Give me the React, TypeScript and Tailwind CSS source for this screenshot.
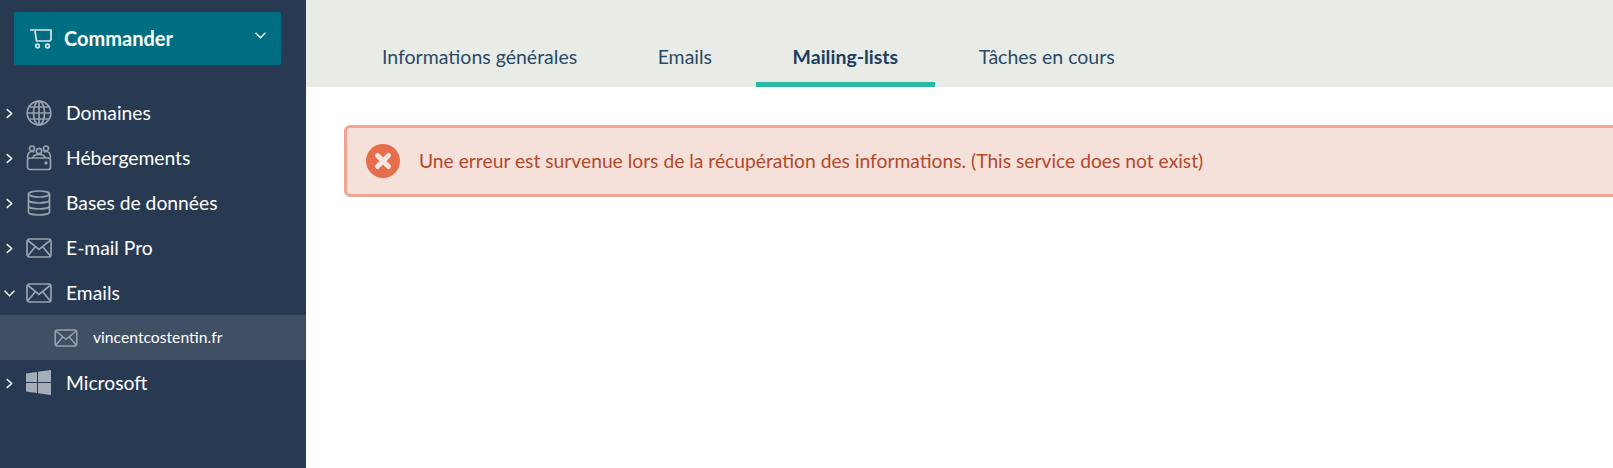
import type { ReactNode } from "react";

function Chevron({ open = false }: { open?: boolean }) {
  return (
    <svg className="w-[11px] h-[11px]" viewBox="0 0 10 10" fill="none" stroke="#fff" strokeWidth={1.3}>
      <path d={open ? "M0.500 2.500l4.500 4.500 4.500-4.500" : "M2.500 1l4.500 4-4.500 4"} />
    </svg>
  );
}

function GlobeIcon() {
  return (
    <svg className="w-[26px] h-[26px]" viewBox="0 0 26 26" fill="none" stroke="#99a2ad" strokeWidth={1.7}>
      <circle cx="13" cy="13" r="11.800" />
      <ellipse cx="13" cy="13" rx="5.500" ry="11.800" />
      <path d="M13 1v24M1.500 13h23M3.500 7h19M3.500 19h19" />
    </svg>
  );
}

function HostingIcon() {
  return (
    <svg className="w-[26px] h-[26px]" viewBox="0 0 26 26" fill="none" stroke="#99a2ad" strokeWidth={1.7}>
      <circle cx="6" cy="3.500" r="2.500" />
      <circle cx="20" cy="3.500" r="2.500" />
      <circle cx="13" cy="6" r="2.700" />
      <path d="M1.500 13c0-4.500 1.800-6.500 4.500-6.500 1 0 1.700.2 2.300.6M24.500 13c0-4.500-1.800-6.500-4.500-6.500-1 0-1.700.2-2.300.6M7 13c0-2 2-3.500 6-3.500s6 1.500 6 3.500" />
      <rect x="1.500" y="13" width="23" height="11.500" rx="2.500" />
      <circle cx="20" cy="18" r="0.800" fill="#99a2ad" />
    </svg>
  );
}

function DatabaseIcon() {
  return (
    <svg className="w-[26px] h-[26px]" viewBox="0 0 26 26" fill="none" stroke="#99a2ad" strokeWidth={1.7}>
      <ellipse cx="13" cy="4" rx="10.500" ry="3" />
      <path d="M2.500 4v18c0 1.700 4.700 3 10.500 3s10.500-1.300 10.500-3V4" />
      <path d="M2.500 10c0 1.700 4.700 3 10.500 3s10.500-1.300 10.500-3M2.500 16c0 1.700 4.700 3 10.500 3s10.500-1.300 10.500-3" />
    </svg>
  );
}

function MailIcon({ small = false }: { small?: boolean }) {
  return (
    <svg className={small ? "w-[24px] h-[18px]" : "w-[26px] h-[20px]"} viewBox="0 0 26 20" fill="none" stroke="#99a2ad" strokeWidth={1.7}>
      <rect x="1" y="1" width="24" height="18" rx="2.500" />
      <path d="M2 2.500l11 9 11-9M2 17.500l7.500-9M24 17.500l-7.500-9" />
    </svg>
  );
}

function WindowsIcon() {
  return (
    <svg className="w-[25px] h-[25px]" viewBox="0 0 25 25" fill="#a5aeb8">
      <path d="M0 3.500l11-1.500v10H0zM12 1.800L25 0v12H12zM0 13h11v10L0 21.500zM12 13h13v12l-13-1.800z" />
    </svg>
  );
}

function CartIcon() {
  return (
    <svg className="w-[22px] h-[20px]" viewBox="0 0 22 20" fill="none" stroke="#d7e5e8" strokeWidth={1.7}>
      <path d="M0 1h21v9.500l-1 1.500H6.500L5 2" />
      <circle cx="7.500" cy="17" r="1.800" />
      <circle cx="17.500" cy="17" r="1.800" />
    </svg>
  );
}

function NavRow({ icon, label, open }: { icon: ReactNode; label: string; open?: boolean }) {
  return (
    <div className="h-[45px] flex items-center text-white text-[19.3px]">
      <div className="w-[26px] pl-[4px] pt-[2px]">
        <Chevron open={open} />
      </div>
      <div className="w-[41px]">{icon}</div>
      <span className="pt-[1px] -ml-[1px]">{label}</span>
    </div>
  );
}

const tabs = ["Informations générales", "Emails", "Mailing-lists", "Tâches en cours"];

export default function App() {
  return (
    <div className="flex h-screen overflow-hidden bg-white font-['Lato',sans-serif]">
      <aside className="w-[306px] shrink-0 bg-[#283a52] pt-[12px]">
        <div className="ml-[14px] mr-[25px] h-[53px] rounded-[2px] bg-[#006e82] flex items-center pl-[16px] pr-[15px] text-white">
          <CartIcon />
          <span className="ml-[12px] -mt-[1px] text-[20px] font-bold">Commander</span>
          <div className="ml-auto -mt-[6px]">
            <Chevron open />
          </div>
        </div>
        <nav className="mt-[25px]">
          <NavRow icon={<GlobeIcon />} label="Domaines" />
          <NavRow icon={<HostingIcon />} label="Hébergements" />
          <NavRow icon={<DatabaseIcon />} label="Bases de données" />
          <NavRow icon={<MailIcon />} label="E-mail Pro" />
          <NavRow icon={<MailIcon />} label="Emails" open />
          <div className="h-[45px] bg-[#3f4f64] flex items-center pl-[54px] text-white text-[15.7px]">
            <div className="w-[39px]">
              <MailIcon small />
            </div>
            <span>vincentcostentin.fr</span>
          </div>
          <NavRow icon={<WindowsIcon />} label="Microsoft" />
        </nav>
      </aside>
      <main className="flex-1 min-w-0 overflow-hidden">
        <div className="h-[87px] bg-[#e9ebe6] flex items-end pl-[39px] gap-[6.5px]">
          {tabs.map((t) => (
            <div
              key={t}
              className={
                "h-[56px] px-[37px] flex items-center text-[19.5px] " +
                (t === "Mailing-lists"
                  ? "font-bold text-[#1d3f5f] border-b-[5px] border-[#2bb9a5]"
                  : "text-[#2b4a68] border-b-[5px] border-transparent")
              }
            >
              {t}
            </div>
          ))}
        </div>
        <div className="mt-[38px] ml-[38px] -mr-[10px] h-[72px] rounded-[6px] border-[3px] border-[#eea594] bg-[#f5e0da] flex items-center pl-[19px]">
          <svg className="w-[34px] h-[34px] shrink-0" viewBox="0 0 34 34">
            <circle cx="17" cy="17" r="17" fill="#e66e4c" />
            <path d="M11.500 11.500l11 11M22.500 11.500l-11 11" stroke="#f8e6e0" strokeWidth={5} strokeLinecap="round" />
          </svg>
          <p className="ml-[19px] pt-[1px] text-[19.25px] text-[#b3492c]">
            Une erreur est survenue lors de la récupération des informations. (This service does not exist)
          </p>
        </div>
      </main>
    </div>
  );
}
